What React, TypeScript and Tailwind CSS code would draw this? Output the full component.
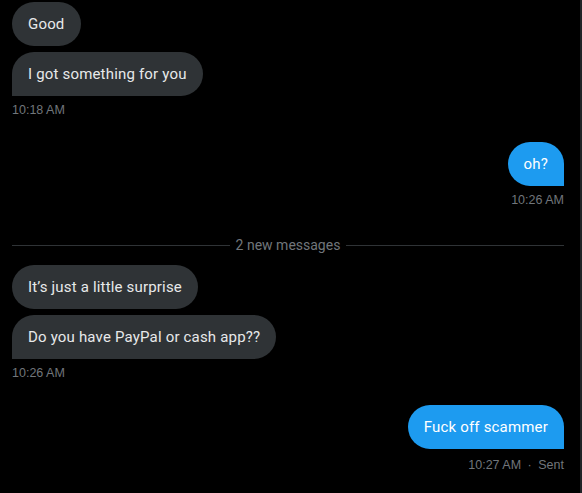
const font = { fontFamily: "Roboto, 'Noto Sans', sans-serif" };
const stamp = "font-['Liberation_Sans',Arial,sans-serif] text-[12.5px] leading-4 text-[#71767b]";

function Received({ text, tail }: { text: string; tail?: boolean }) {
  return (
    <div className="flex">
      <div
        className={`rounded-3xl bg-[#2f3336] px-4 py-3 text-[15px] leading-5 tracking-[0.18px] text-[#e7e9ea] ${
          tail ? "rounded-bl-none" : ""
        }`}
      >
        {text}
      </div>
    </div>
  );
}

function Sent({ text }: { text: string }) {
  return (
    <div className="flex justify-end">
      <div className="rounded-3xl rounded-br-none bg-[#1d9bf0] px-4 py-3 text-[15px] leading-5 tracking-[0.18px] text-white">
        {text}
      </div>
    </div>
  );
}

export default function App() {
  return (
    <div
      className="flex h-[493px] w-[582px] flex-col overflow-hidden border-r-2 border-[#202327] bg-black pl-3 pr-4 pt-0.5"
      style={font}
    >
      <Received text="Good" />
      <div className="mt-1.5">
        <Received text="I got something for you" tail />
      </div>
      <div className={`mt-1.5 ${stamp}`}>10:18 AM</div>

      <div className="mt-6">
        <Sent text="oh?" />
      </div>
      <div className={`mt-1.5 text-right ${stamp}`}>10:26 AM</div>

      <div className="mt-[27px] flex h-5 items-center gap-1.5">
        <div className="h-px flex-1 bg-[#2f3336]" />
        <span className="text-[14px] leading-5 text-[#71767b]">2 new messages</span>
        <div className="h-px flex-1 bg-[#2f3336]" />
      </div>

      <div className="mt-2.5">
        <Received text="It’s just a little surprise" />
      </div>
      <div className="mt-1.5">
        <Received text="Do you have PayPal or cash app??" tail />
      </div>
      <div className={`mt-1.5 ${stamp}`}>10:26 AM</div>

      <div className="mt-6">
        <Sent text="Fuck off scammer" />
      </div>
      <div className={`mt-2 text-right ${stamp}`}>
        10:27 AM<span className="mx-[6.5px]">·</span>Sent
      </div>
    </div>
  );
}
